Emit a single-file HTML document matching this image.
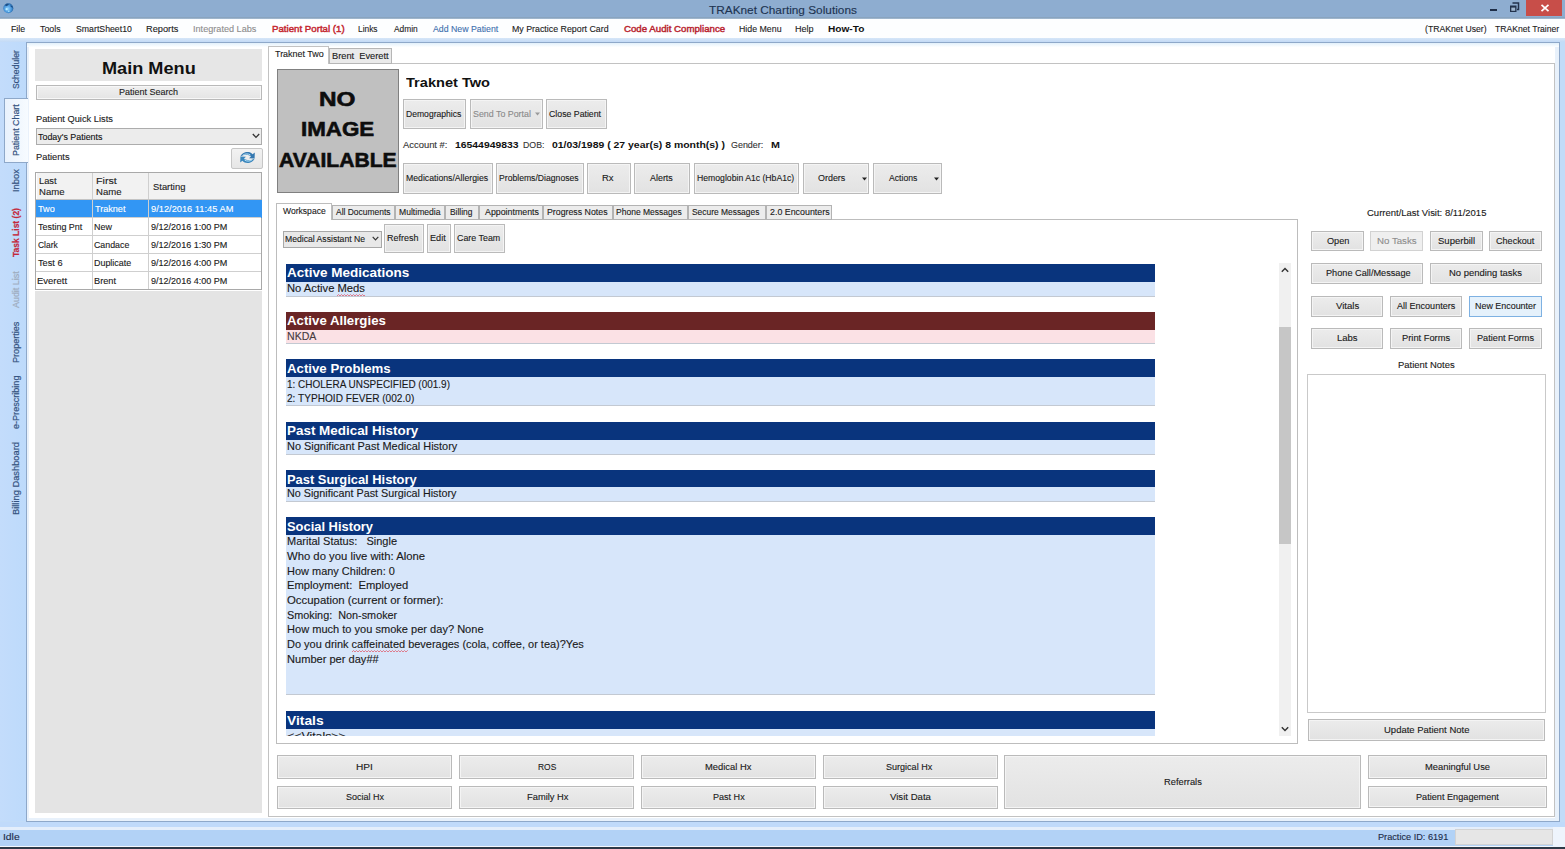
<!DOCTYPE html>
<html><head><meta charset="utf-8"><style>
html,body{margin:0;padding:0;width:1565px;height:849px;overflow:hidden;background:#c2dcf8;}
body{position:relative;font-family:"Liberation Sans",sans-serif;}
div,span,svg{position:absolute;}
.t{white-space:pre;transform-origin:0 0;}
.n{-webkit-text-stroke:0.12px currentColor;}
</style></head><body>
<div style="left:0px;top:0px;width:1565px;height:849px;background:#c2dcf8;"></div>
<div style="left:0px;top:0px;width:1565px;height:17px;background:#8eadd0;"></div>
<div style="left:0px;top:17px;width:1565px;height:2px;background:linear-gradient(#7f9bb8,#a9bed3);"></div>
<div style="left:0px;top:19px;width:1565px;height:19px;background:#fdfeff;"></div>
<div style="left:0px;top:38px;width:1565px;height:4px;background:linear-gradient(#d6e6f8,#c3daf6);"></div>
<div style="left:26px;top:42px;width:1534px;height:780px;background:#e8f1fb;border:1px solid #8ea8c9;box-sizing:border-box;"></div>
<div style="left:28px;top:44px;width:1527px;height:774px;background:#fff;"></div>
<div style="left:27px;top:43px;width:1532px;height:4px;background:linear-gradient(#e2f0fb,#fdfeff);"></div>
<div style="left:27px;top:47px;width:2px;height:771px;background:#e9f1fb;"></div>
<div style="left:0px;top:822px;width:1565px;height:5px;background:#c0dafa;"></div>
<div style="left:0px;top:827px;width:1565px;height:3px;background:#e4eefb;"></div>
<div style="left:0px;top:830px;width:1565px;height:16px;background:#b2d2f6;"></div>
<div style="left:0px;top:846px;width:1565px;height:1px;background:#f4f8fd;"></div>
<div style="left:0px;top:847px;width:1565px;height:2px;background:#2d3947;"></div>
<svg style="left:2px;top:1.5px" width="13" height="13" viewBox="0 0 13 13">
<defs><radialGradient id="gl" cx="0.45" cy="0.55" r="0.6"><stop offset="0" stop-color="#8fd0ff"/><stop offset="0.6" stop-color="#4a98dc"/><stop offset="1" stop-color="#1d5a9a"/></radialGradient></defs>
<circle cx="6.3" cy="6.2" r="5" fill="url(#gl)"/>
<path d="M3 3 Q5 1.2 7 2.2 Q6 3.6 4 4.2 Z" fill="#1b4d86"/><path d="M8.5 3.2 Q10.8 3.8 11 6 Q9.5 5.6 8.6 4.6 Z" fill="#1b4d86"/>
<circle cx="4.6" cy="7.2" r="1.1" fill="#b8ecff"/><circle cx="6.8" cy="9.2" r="0.8" fill="#a8e4ff"/></svg>
<span class="t n" style="left:708.96px;top:3.93px;font-size:11.77px;line-height:11.77px;color:#1d3350;transform:scaleX(1.0049);">TRAKnet Charting Solutions</span>
<div style="left:1490px;top:9px;width:7px;height:2px;background:#1e2e48;"></div>
<svg style="left:1509px;top:2px" width="11" height="11" viewBox="0 0 11 11"><path d="M3.5 1 H9.5 V7.5 H8" stroke="#22324c" stroke-width="1.5" fill="none"/><rect x="1" y="3.5" width="6.5" height="6.5" fill="#22324c"/><rect x="2.3" y="5.6" width="3.9" height="3.2" fill="#9fb6cf"/></svg>
<div style="left:1526px;top:0px;width:36px;height:16px;background:#c84e49;"></div>
<svg style="position:absolute;left:1540px;top:4px" width="10" height="8" viewBox="0 0 10 8"><path d="M1.5 0.8 L8.5 7.2 M8.5 0.8 L1.5 7.2" stroke="#fff" stroke-width="1.7"/></svg>
<span class="t n" style="left:10.80px;top:23.93px;font-size:9.88px;line-height:9.88px;color:#1b1b1b;transform:scaleX(0.8857);">File</span>
<span class="t n" style="left:40.12px;top:23.93px;font-size:9.88px;line-height:9.88px;color:#1b1b1b;transform:scaleX(0.8920);">Tools</span>
<span class="t n" style="left:75.71px;top:23.93px;font-size:9.88px;line-height:9.88px;color:#1b1b1b;transform:scaleX(0.8851);">SmartSheet10</span>
<span class="t n" style="left:145.86px;top:23.93px;font-size:9.88px;line-height:9.88px;color:#1b1b1b;transform:scaleX(0.9355);">Reports</span>
<span class="t n" style="left:192.78px;top:23.93px;font-size:9.88px;line-height:9.88px;color:#8d8d8d;transform:scaleX(0.9236);">Integrated Labs</span>
<span class="t n" style="left:271.73px;top:23.93px;font-size:9.88px;line-height:9.88px;color:#c4262f;transform:scaleX(0.9801);-webkit-text-stroke:0.45px #c4262f;">Patient Portal (1)</span>
<span class="t n" style="left:358.03px;top:23.93px;font-size:9.88px;line-height:9.88px;color:#1b1b1b;transform:scaleX(0.8477);">Links</span>
<span class="t n" style="left:393.60px;top:23.93px;font-size:9.88px;line-height:9.88px;color:#1b1b1b;transform:scaleX(0.8474);">Admin</span>
<span class="t n" style="left:432.50px;top:23.93px;font-size:9.88px;line-height:9.88px;color:#3d6fae;transform:scaleX(0.8867);">Add New Patient</span>
<span class="t n" style="left:511.89px;top:23.93px;font-size:9.88px;line-height:9.88px;color:#1b1b1b;transform:scaleX(0.8937);">My Practice Report Card</span>
<span class="t n" style="left:623.82px;top:23.93px;font-size:9.88px;line-height:9.88px;color:#b9242f;transform:scaleX(0.9800);-webkit-text-stroke:0.45px #b9242f;">Code Audit Compliance</span>
<span class="t n" style="left:738.50px;top:23.93px;font-size:9.88px;line-height:9.88px;color:#1b1b1b;transform:scaleX(0.8910);">Hide Menu</span>
<span class="t n" style="left:795.08px;top:23.93px;font-size:9.88px;line-height:9.88px;color:#1b1b1b;transform:scaleX(0.9150);">Help</span>
<span class="t" style="left:828.34px;top:23.93px;font-size:9.88px;line-height:9.88px;font-weight:bold;color:#111;transform:scaleX(1.0248);">How-To</span>
<span class="t n" style="left:1424.68px;top:23.93px;font-size:9.88px;line-height:9.88px;color:#1b1b1b;transform:scaleX(0.8772);">(TRAKnet User)</span>
<span class="t n" style="left:1495.33px;top:23.93px;font-size:9.88px;line-height:9.88px;color:#1b1b1b;transform:scaleX(0.8725);">TRAKnet Trainer</span>
<div style="left:0px;top:42px;width:27px;height:779px;background:linear-gradient(90deg,#c3dcfb,#bddafb);"></div>
<div style="left:26px;top:42px;width:1px;height:779px;background:#8ea8c9;"></div>
<div style="left:4px;top:98px;width:24px;height:65px;background:linear-gradient(90deg,#e9f2fd,#f7fbff);border:1px solid #8ea8c9;border-right:none;box-sizing:border-box;"></div>
<span class="t" style="left:11.27px;top:89.39px;font-size:9.60px;line-height:9.60px;color:#34527f;transform:rotate(-90deg) scaleX(0.8986);-webkit-text-stroke:0.2px #34527f;">Scheduler</span>
<span class="t" style="left:11.47px;top:155.71px;font-size:9.60px;line-height:9.60px;color:#34527f;transform:rotate(-90deg) scaleX(0.9239);-webkit-text-stroke:0.2px #34527f;">Patient Chart</span>
<span class="t" style="left:11.27px;top:192.14px;font-size:9.60px;line-height:9.60px;color:#34527f;transform:rotate(-90deg) scaleX(0.9728);-webkit-text-stroke:0.2px #34527f;">Inbox</span>
<span class="t" style="left:11.47px;top:256.99px;font-size:9.60px;line-height:9.60px;font-weight:bold;color:#c4283a;transform:rotate(-90deg) scaleX(0.8856);-webkit-text-stroke:0.2px #c4283a;">Task List (2)</span>
<span class="t" style="left:11.27px;top:307.70px;font-size:9.60px;line-height:9.60px;color:#9eabbd;transform:rotate(-90deg) scaleX(0.9287);-webkit-text-stroke:0.2px #9eabbd;">Audit List</span>
<span class="t" style="left:11.27px;top:363.13px;font-size:9.60px;line-height:9.60px;color:#34527f;transform:rotate(-90deg) scaleX(0.9468);-webkit-text-stroke:0.2px #34527f;">Properties</span>
<span class="t" style="left:11.27px;top:428.96px;font-size:9.60px;line-height:9.60px;color:#34527f;transform:rotate(-90deg) scaleX(0.9453);-webkit-text-stroke:0.2px #34527f;">e-Prescribing</span>
<span class="t" style="left:11.27px;top:515.24px;font-size:9.60px;line-height:9.60px;color:#34527f;transform:rotate(-90deg) scaleX(0.9699);-webkit-text-stroke:0.2px #34527f;">Billing Dashboard</span>
<div style="left:35px;top:49px;width:227px;height:32px;background:#e6e6e6;"></div>
<span class="t" style="left:101.62px;top:59.64px;font-size:16.13px;line-height:16.13px;font-weight:bold;color:#111;transform:scaleX(1.1264);">Main Menu</span>
<div style="left:36px;top:85px;width:226px;height:15px;background:linear-gradient(#f0f0f0,#e4e4e4);border:1px solid #b9b9b9;box-shadow:inset 0 0 0 1px #f7f7f7;box-sizing:border-box;"></div>
<span class="t n" style="left:118.98px;top:87.51px;font-size:9.20px;line-height:9.20px;color:#222;transform:scaleX(0.9794);">Patient Search</span>
<span class="t n" style="left:36.06px;top:114.71px;font-size:9.20px;line-height:9.20px;color:#222;transform:scaleX(1.0104);">Patient Quick Lists</span>
<div style="left:36px;top:128px;width:226px;height:17px;background:#ececec;border:1px solid #acacac;box-sizing:border-box;"></div>
<span class="t n" style="left:38.12px;top:131.90px;font-size:9.80px;line-height:9.80px;color:#111;transform:scaleX(0.9077);">Today's Patients</span>
<svg style="position:absolute;left:252px;top:133px" width="8" height="6" viewBox="0 0 8 6"><path d="M0.8 1 L4 4.4 L7.2 1" stroke="#333" stroke-width="1.3" fill="none"/></svg>
<span class="t n" style="left:36.05px;top:153.31px;font-size:9.20px;line-height:9.20px;color:#222;transform:scaleX(1.0124);">Patients</span>
<div style="left:231px;top:148px;width:32px;height:21px;background:linear-gradient(#f2f2f2,#e6e6e6);border:1px solid #c6c6c6;border-radius:2px;box-sizing:border-box;"></div>
<svg style="left:239px;top:150px" width="17" height="15" viewBox="0 0 17 15">
<path d="M1.5 6.5 C2.5 2.5 10 0 13.6 4.2 L15.8 2.6 L15.6 8.6 L10 8.2 L12 6.4 C9 3.8 4.5 4.4 1.5 6.5 Z" fill="#3578b0"/>
<path d="M15.5 8.5 C14.5 12.5 7 15 3.4 10.8 L1.2 12.4 L1.4 6.4 L7 6.8 L5 8.6 C8 11.2 12.5 10.6 15.5 8.5 Z" fill="#3a86bc"/>
<path d="M4 5.2 C6 3.6 9 3.4 11.4 5" stroke="#c4ecff" stroke-width="0.9" fill="none"/>
<path d="M13 9.8 C11 11.4 8 11.6 5.6 10" stroke="#c4ecff" stroke-width="0.9" fill="none"/></svg>
<div style="left:35px;top:172px;width:227px;height:118px;background:#fff;border:1px solid #a9a9a9;box-sizing:border-box;"></div>
<div style="left:37px;top:173px;width:224px;height:27px;background:#f2f2f2;"></div>
<div style="left:36px;top:200px;width:226px;height:18px;background:#3296f4;"></div>
<div style="left:36px;top:217px;width:225px;height:1px;background:#cfcfcf;"></div>
<div style="left:36px;top:235px;width:225px;height:1px;background:#cfcfcf;"></div>
<div style="left:36px;top:253px;width:225px;height:1px;background:#cfcfcf;"></div>
<div style="left:36px;top:271px;width:225px;height:1px;background:#cfcfcf;"></div>
<div style="left:92px;top:173px;width:1px;height:116px;background:#cfcfcf;"></div>
<div style="left:148px;top:173px;width:1px;height:116px;background:#cfcfcf;"></div>
<div style="left:36px;top:199px;width:225px;height:1px;background:#c4c4c4;"></div>
<span class="t n" style="left:39.45px;top:177.41px;font-size:9.20px;line-height:9.20px;color:#222;transform:scaleX(1.0145);">Last</span>
<span class="t n" style="left:39.43px;top:187.81px;font-size:9.20px;line-height:9.20px;color:#222;transform:scaleX(1.0399);">Name</span>
<span class="t n" style="left:96.35px;top:177.41px;font-size:9.20px;line-height:9.20px;color:#222;transform:scaleX(1.1602);">First</span>
<span class="t n" style="left:96.43px;top:187.81px;font-size:9.20px;line-height:9.20px;color:#222;transform:scaleX(1.0399);">Name</span>
<span class="t n" style="left:153.18px;top:182.61px;font-size:9.20px;line-height:9.20px;color:#222;transform:scaleX(1.0234);">Starting</span>
<span class="t n" style="left:37.82px;top:205.41px;font-size:9.20px;line-height:9.20px;color:#fff;transform:scaleX(0.9920);">Two</span>
<span class="t n" style="left:94.72px;top:205.41px;font-size:9.20px;line-height:9.20px;color:#fff;transform:scaleX(0.9873);">Traknet</span>
<span class="t n" style="left:150.58px;top:205.41px;font-size:9.20px;line-height:9.20px;color:#fff;transform:scaleX(1.0099);">9/12/2016 11:45 AM</span>
<span class="t n" style="left:37.82px;top:223.31px;font-size:9.20px;line-height:9.20px;color:#1a1a1a;transform:scaleX(0.9743);">Testing Pnt</span>
<span class="t n" style="left:94.19px;top:223.31px;font-size:9.20px;line-height:9.20px;color:#1a1a1a;transform:scaleX(0.9712);">New</span>
<span class="t n" style="left:150.59px;top:223.31px;font-size:9.20px;line-height:9.20px;color:#1a1a1a;transform:scaleX(0.9832);">9/12/2016 1:00 PM</span>
<span class="t n" style="left:37.58px;top:241.21px;font-size:9.20px;line-height:9.20px;color:#1a1a1a;transform:scaleX(0.9181);">Clark</span>
<span class="t n" style="left:94.46px;top:241.21px;font-size:9.20px;line-height:9.20px;color:#1a1a1a;transform:scaleX(0.9603);">Candace</span>
<span class="t n" style="left:150.59px;top:241.21px;font-size:9.20px;line-height:9.20px;color:#1a1a1a;transform:scaleX(0.9832);">9/12/2016 1:30 PM</span>
<span class="t n" style="left:37.82px;top:259.11px;font-size:9.20px;line-height:9.20px;color:#1a1a1a;transform:scaleX(1.0014);">Test 6</span>
<span class="t n" style="left:94.19px;top:259.11px;font-size:9.20px;line-height:9.20px;color:#1a1a1a;transform:scaleX(0.9701);">Duplicate</span>
<span class="t n" style="left:150.59px;top:259.11px;font-size:9.20px;line-height:9.20px;color:#1a1a1a;transform:scaleX(0.9832);">9/12/2016 4:00 PM</span>
<span class="t n" style="left:37.24px;top:277.01px;font-size:9.20px;line-height:9.20px;color:#1a1a1a;transform:scaleX(1.0340);">Everett</span>
<span class="t n" style="left:94.16px;top:277.01px;font-size:9.20px;line-height:9.20px;color:#1a1a1a;transform:scaleX(1.0019);">Brent</span>
<span class="t n" style="left:150.59px;top:277.01px;font-size:9.20px;line-height:9.20px;color:#1a1a1a;transform:scaleX(0.9832);">9/12/2016 4:00 PM</span>
<div style="left:35px;top:291px;width:227px;height:522px;background:#e4e4e4;"></div>
<div style="left:268px;top:63px;width:1287px;height:754px;background:#fff;border:1px solid #c2c2c2;box-sizing:border-box;"></div>
<div style="left:268px;top:46px;width:61px;height:18px;background:#fff;border:1px solid #c2c2c2;border-bottom:none;box-sizing:border-box;"></div>
<div style="left:329px;top:48px;width:63px;height:16px;background:#eaeaea;border:1px solid #b6b6b6;box-sizing:border-box;"></div>
<span class="t n" style="left:274.62px;top:49.91px;font-size:9.20px;line-height:9.20px;color:#1a1a1a;transform:scaleX(0.9749);">Traknet Two</span>
<span class="t n" style="left:331.76px;top:51.61px;font-size:9.20px;line-height:9.20px;color:#1a1a1a;transform:scaleX(1.0085);">Brent  Everett</span>
<div style="left:277px;top:69px;width:122px;height:124px;background:#c0c0c0;border:1.5px solid #808080;box-sizing:border-box;"></div>
<span class="t" style="left:319.22px;top:88.77px;font-size:20.35px;line-height:20.35px;font-weight:bold;color:#0d0d0d;transform:scaleX(1.1950);-webkit-text-stroke:0.6px #0d0d0d;">NO</span>
<span class="t" style="left:300.75px;top:119.13px;font-size:20.64px;line-height:20.64px;font-weight:bold;color:#0d0d0d;transform:scaleX(1.0835);-webkit-text-stroke:0.6px #0d0d0d;">IMAGE</span>
<span class="t" style="left:278.67px;top:148.96px;font-size:21.08px;line-height:21.08px;font-weight:bold;color:#0d0d0d;transform:scaleX(1.0015);-webkit-text-stroke:0.6px #0d0d0d;">AVAILABLE</span>
<span class="t" style="left:406.05px;top:76.72px;font-size:12.50px;line-height:12.50px;font-weight:bold;color:#111;transform:scaleX(1.1671);">Traknet Two</span>
<div style="left:403px;top:99px;width:63px;height:30px;background:linear-gradient(#ececec,#e2e2e2);border:1px solid #bababa;box-shadow:inset 0 0 0 1px #f4f4f4;box-sizing:border-box;"></div>
<span class="t n" style="left:405.51px;top:110.21px;font-size:9.20px;line-height:9.20px;color:#1a1a1a;transform:scaleX(0.9334);">Demographics</span>
<div style="left:470px;top:99px;width:73px;height:30px;background:linear-gradient(#ececec,#e2e2e2);border:1px solid #bababa;box-shadow:inset 0 0 0 1px #f4f4f4;box-sizing:border-box;"></div>
<span class="t n" style="left:472.60px;top:110.21px;font-size:9.20px;line-height:9.20px;color:#8a8a8a;transform:scaleX(0.9636);">Send To Portal</span>
<svg style="position:absolute;left:535px;top:112px" width="5" height="4"><path d="M0 0.5 L5 0.5 L2.5 3.5Z" fill="#9a9a9a"/></svg>
<div style="left:546px;top:99px;width:61px;height:30px;background:linear-gradient(#ececec,#e2e2e2);border:1px solid #bababa;box-shadow:inset 0 0 0 1px #f4f4f4;box-sizing:border-box;"></div>
<span class="t n" style="left:549.16px;top:110.21px;font-size:9.20px;line-height:9.20px;color:#1a1a1a;transform:scaleX(0.9522);">Close Patient</span>
<span class="t n" style="left:403.00px;top:140.81px;font-size:9.20px;line-height:9.20px;color:#333;transform:scaleX(1.0236);">Account #:</span>
<span class="t" style="left:454.88px;top:140.97px;font-size:9.01px;line-height:9.01px;font-weight:bold;color:#111;transform:scaleX(1.1539);">16544949833</span>
<span class="t n" style="left:522.60px;top:140.81px;font-size:9.20px;line-height:9.20px;color:#333;transform:scaleX(0.9529);">DOB:</span>
<span class="t" style="left:552.28px;top:140.97px;font-size:9.01px;line-height:9.01px;font-weight:bold;color:#111;transform:scaleX(1.1599);">01/03/1989 ( 27 year(s) 8 month(s) )</span>
<span class="t n" style="left:730.55px;top:140.81px;font-size:9.20px;line-height:9.20px;color:#333;transform:scaleX(0.9711);">Gender:</span>
<span class="t" style="left:770.80px;top:140.97px;font-size:9.01px;line-height:9.01px;font-weight:bold;color:#111;transform:scaleX(1.1889);">M</span>
<div style="left:403px;top:163px;width:90px;height:31px;background:linear-gradient(#ececec,#e2e2e2);border:1px solid #bababa;box-shadow:inset 0 0 0 1px #f4f4f4;box-sizing:border-box;"></div>
<span class="t n" style="left:405.50px;top:174.21px;font-size:9.20px;line-height:9.20px;color:#1a1a1a;transform:scaleX(0.9466);">Medications/Allergies</span>
<div style="left:496px;top:163px;width:88px;height:31px;background:linear-gradient(#ececec,#e2e2e2);border:1px solid #bababa;box-shadow:inset 0 0 0 1px #f4f4f4;box-sizing:border-box;"></div>
<span class="t n" style="left:498.81px;top:174.21px;font-size:9.20px;line-height:9.20px;color:#1a1a1a;transform:scaleX(0.9390);">Problems/Diagnoses</span>
<div style="left:587px;top:163px;width:44px;height:31px;background:linear-gradient(#ececec,#e2e2e2);border:1px solid #bababa;box-shadow:inset 0 0 0 1px #f4f4f4;box-sizing:border-box;"></div>
<span class="t n" style="left:601.74px;top:174.21px;font-size:9.20px;line-height:9.20px;color:#1a1a1a;transform:scaleX(1.0292);">Rx</span>
<div style="left:634px;top:163px;width:56px;height:31px;background:linear-gradient(#ececec,#e2e2e2);border:1px solid #bababa;box-shadow:inset 0 0 0 1px #f4f4f4;box-sizing:border-box;"></div>
<span class="t n" style="left:650.20px;top:174.21px;font-size:9.20px;line-height:9.20px;color:#1a1a1a;transform:scaleX(0.9705);">Alerts</span>
<div style="left:694px;top:163px;width:105px;height:31px;background:linear-gradient(#ececec,#e2e2e2);border:1px solid #bababa;box-shadow:inset 0 0 0 1px #f4f4f4;box-sizing:border-box;"></div>
<span class="t n" style="left:696.61px;top:174.21px;font-size:9.20px;line-height:9.20px;color:#1a1a1a;transform:scaleX(0.9423);">Hemoglobin A1c (HbA1c)</span>
<div style="left:803px;top:163px;width:66px;height:31px;background:linear-gradient(#ececec,#e2e2e2);border:1px solid #bababa;box-shadow:inset 0 0 0 1px #f4f4f4;box-sizing:border-box;"></div>
<span class="t n" style="left:817.50px;top:174.21px;font-size:9.20px;line-height:9.20px;color:#1a1a1a;transform:scaleX(0.9719);">Orders</span>
<div style="left:873px;top:163px;width:69px;height:31px;background:linear-gradient(#ececec,#e2e2e2);border:1px solid #bababa;box-shadow:inset 0 0 0 1px #f4f4f4;box-sizing:border-box;"></div>
<span class="t n" style="left:889.00px;top:174.21px;font-size:9.20px;line-height:9.20px;color:#1a1a1a;transform:scaleX(0.9412);">Actions</span>
<svg style="position:absolute;left:861.5px;top:176.5px" width="5" height="4"><path d="M0 0.5 L5 0.5 L2.5 3.5Z" fill="#222"/></svg>
<svg style="position:absolute;left:934px;top:176.5px" width="5" height="4"><path d="M0 0.5 L5 0.5 L2.5 3.5Z" fill="#222"/></svg>
<div style="left:276px;top:219px;width:1022px;height:525px;background:#fff;border:1px solid #bdbdbd;box-sizing:border-box;"></div>
<div style="left:332px;top:205px;width:63px;height:15px;background:#ececec;border:1px solid #b3b3b3;box-sizing:border-box;"></div>
<span class="t n" style="left:335.50px;top:207.81px;font-size:9.20px;line-height:9.20px;color:#1a1a1a;transform:scaleX(0.9208);">All Documents</span>
<div style="left:395px;top:205px;width:50px;height:15px;background:#ececec;border:1px solid #b3b3b3;box-sizing:border-box;"></div>
<span class="t n" style="left:398.61px;top:207.81px;font-size:9.20px;line-height:9.20px;color:#1a1a1a;transform:scaleX(0.9349);">Multimedia</span>
<div style="left:445px;top:205px;width:34px;height:15px;background:#ececec;border:1px solid #b3b3b3;box-sizing:border-box;"></div>
<span class="t n" style="left:449.73px;top:207.81px;font-size:9.20px;line-height:9.20px;color:#1a1a1a;transform:scaleX(0.9144);">Billing</span>
<div style="left:479px;top:205px;width:64px;height:15px;background:#ececec;border:1px solid #b3b3b3;box-sizing:border-box;"></div>
<span class="t n" style="left:484.90px;top:207.81px;font-size:9.20px;line-height:9.20px;color:#1a1a1a;transform:scaleX(0.9600);">Appointments</span>
<div style="left:543px;top:205px;width:70px;height:15px;background:#ececec;border:1px solid #b3b3b3;box-sizing:border-box;"></div>
<span class="t n" style="left:547.30px;top:207.81px;font-size:9.20px;line-height:9.20px;color:#1a1a1a;transform:scaleX(0.9562);">Progress Notes</span>
<div style="left:613px;top:205px;width:75px;height:15px;background:#ececec;border:1px solid #b3b3b3;box-sizing:border-box;"></div>
<span class="t n" style="left:616.32px;top:207.81px;font-size:9.20px;line-height:9.20px;color:#1a1a1a;transform:scaleX(0.9270);">Phone Messages</span>
<div style="left:688px;top:205px;width:78px;height:15px;background:#ececec;border:1px solid #b3b3b3;box-sizing:border-box;"></div>
<span class="t n" style="left:692.42px;top:207.81px;font-size:9.20px;line-height:9.20px;color:#1a1a1a;transform:scaleX(0.9162);">Secure Messages</span>
<div style="left:766px;top:205px;width:66px;height:15px;background:#ececec;border:1px solid #b3b3b3;box-sizing:border-box;"></div>
<span class="t n" style="left:769.86px;top:207.81px;font-size:9.20px;line-height:9.20px;color:#1a1a1a;transform:scaleX(0.9642);">2.0 Encounters</span>
<div style="left:276px;top:203px;width:56px;height:17px;background:#fff;border:1px solid #bdbdbd;border-bottom:none;box-sizing:border-box;"></div>
<span class="t n" style="left:282.76px;top:206.71px;font-size:9.20px;line-height:9.20px;color:#1a1a1a;transform:scaleX(0.9326);">Workspace</span>
<div style="left:283px;top:231px;width:99px;height:17px;background:#e8e8e8;border:1px solid #a8a8a8;box-sizing:border-box;"></div>
<span class="t n" style="left:285.31px;top:234.91px;font-size:9.20px;line-height:9.20px;color:#1a1a1a;transform:scaleX(0.9380);">Medical Assistant Ne</span>
<svg style="position:absolute;left:371.5px;top:236px" width="7" height="5" viewBox="0 0 7 5"><path d="M0.7 0.8 L3.5 3.8 L6.3 0.8" stroke="#333" stroke-width="1.2" fill="none"/></svg>
<div style="left:384px;top:224px;width:40px;height:29px;background:linear-gradient(#ececec,#e2e2e2);border:1px solid #bababa;box-shadow:inset 0 0 0 1px #f4f4f4;box-sizing:border-box;"></div>
<span class="t n" style="left:386.98px;top:234.11px;font-size:9.20px;line-height:9.20px;color:#1a1a1a;transform:scaleX(0.9752);">Refresh</span>
<div style="left:427px;top:224px;width:24px;height:29px;background:linear-gradient(#ececec,#e2e2e2);border:1px solid #bababa;box-shadow:inset 0 0 0 1px #f4f4f4;box-sizing:border-box;"></div>
<span class="t n" style="left:429.77px;top:234.11px;font-size:9.20px;line-height:9.20px;color:#1a1a1a;transform:scaleX(0.9906);">Edit</span>
<div style="left:454px;top:224px;width:51px;height:29px;background:linear-gradient(#ececec,#e2e2e2);border:1px solid #bababa;box-shadow:inset 0 0 0 1px #f4f4f4;box-sizing:border-box;"></div>
<span class="t n" style="left:457.26px;top:234.11px;font-size:9.20px;line-height:9.20px;color:#1a1a1a;transform:scaleX(0.9659);">Care Team</span>
<div style="left:277px;top:256px;width:1000px;height:479.6px;overflow:hidden;">
<div style="left:8.800000000000011px;top:7.5px;width:869.4px;height:18.0px;background:#09347d;"></div>
<div style="left:8.800000000000011px;top:25.5px;width:869.7px;height:15.3px;background:#d7e6fa;border-bottom:1px solid #c3c9d2;box-sizing:border-box;"></div>
<span class="t" style="left:10.06px;top:9.96px;font-size:13.52px;line-height:13.52px;font-weight:bold;color:#fff;transform:scaleX(0.9990);">Active Medications</span>
<span class="t n" style="left:9.50px;top:27.96px;font-size:10.32px;line-height:10.32px;color:#1a1a1a;transform:scaleX(1.0882);">No Active Meds</span>
<div style="left:8.800000000000011px;top:55.8px;width:869.4px;height:18.0px;background:#6a2525;"></div>
<div style="left:8.800000000000011px;top:73.8px;width:869.7px;height:14.6px;background:#fbe1e5;border-bottom:1px solid #c3c9d2;box-sizing:border-box;"></div>
<span class="t" style="left:10.07px;top:58.26px;font-size:13.52px;line-height:13.52px;font-weight:bold;color:#fff;transform:scaleX(0.9797);">Active Allergies</span>
<span class="t n" style="left:9.55px;top:76.26px;font-size:10.32px;line-height:10.32px;color:#463a3e;transform:scaleX(1.0247);">NKDA</span>
<div style="left:8.800000000000011px;top:103.3px;width:869.4px;height:17.9px;background:#09347d;"></div>
<div style="left:8.800000000000011px;top:121.2px;width:869.7px;height:29.2px;background:#d7e6fa;border-bottom:1px solid #c3c9d2;box-sizing:border-box;"></div>
<span class="t" style="left:10.07px;top:105.76px;font-size:13.52px;line-height:13.52px;font-weight:bold;color:#fff;transform:scaleX(0.9788);">Active Problems</span>
<span class="t n" style="left:9.65px;top:123.56px;font-size:10.32px;line-height:10.32px;color:#1a1a1a;transform:scaleX(0.9672);">1: CHOLERA UNSPECIFIED (001.9)</span>
<span class="t n" style="left:9.89px;top:138.06px;font-size:10.32px;line-height:10.32px;color:#1a1a1a;transform:scaleX(0.9795);">2: TYPHOID FEVER (002.0)</span>
<div style="left:8.800000000000011px;top:166.0px;width:869.4px;height:18.0px;background:#09347d;"></div>
<div style="left:8.800000000000011px;top:184.0px;width:869.7px;height:14.6px;background:#d7e6fa;border-bottom:1px solid #c3c9d2;box-sizing:border-box;"></div>
<span class="t" style="left:9.53px;top:168.46px;font-size:13.52px;line-height:13.52px;font-weight:bold;color:#fff;transform:scaleX(0.9935);">Past Medical History</span>
<span class="t n" style="left:9.52px;top:185.96px;font-size:10.32px;line-height:10.32px;color:#1a1a1a;transform:scaleX(1.0610);">No Significant Past Medical History</span>
<div style="left:8.800000000000011px;top:214.2px;width:869.4px;height:16.8px;background:#09347d;"></div>
<div style="left:8.800000000000011px;top:231.0px;width:869.7px;height:14.6px;background:#d7e6fa;border-bottom:1px solid #c3c9d2;box-sizing:border-box;"></div>
<span class="t" style="left:9.56px;top:216.66px;font-size:13.52px;line-height:13.52px;font-weight:bold;color:#fff;transform:scaleX(0.9538);">Past Surgical History</span>
<span class="t n" style="left:9.54px;top:233.16px;font-size:10.32px;line-height:10.32px;color:#1a1a1a;transform:scaleX(1.0446);">No Significant Past Surgical History</span>
<div style="left:8.800000000000011px;top:261.3px;width:869.4px;height:17.9px;background:#09347d;"></div>
<div style="left:8.800000000000011px;top:279.2px;width:869.7px;height:160.0px;background:#d7e6fa;border-bottom:1px solid #c3c9d2;box-sizing:border-box;"></div>
<span class="t" style="left:10.01px;top:263.76px;font-size:13.52px;line-height:13.52px;font-weight:bold;color:#fff;transform:scaleX(0.9544);">Social History</span>
<span class="t n" style="left:9.52px;top:281.46px;font-size:10.32px;line-height:10.32px;color:#1a1a1a;transform:scaleX(1.0661);">Marital Status:   Single</span>
<span class="t n" style="left:10.34px;top:296.11px;font-size:10.32px;line-height:10.32px;color:#1a1a1a;transform:scaleX(1.0947);">Who do you live with: Alone</span>
<span class="t n" style="left:9.52px;top:310.76px;font-size:10.32px;line-height:10.32px;color:#1a1a1a;transform:scaleX(1.0637);">How many Children: 0</span>
<span class="t n" style="left:9.50px;top:325.41px;font-size:10.32px;line-height:10.32px;color:#1a1a1a;transform:scaleX(1.0850);">Employment:  Employed</span>
<span class="t n" style="left:9.89px;top:340.06px;font-size:10.32px;line-height:10.32px;color:#1a1a1a;transform:scaleX(1.1045);">Occupation (current or former):</span>
<span class="t n" style="left:9.91px;top:354.71px;font-size:10.32px;line-height:10.32px;color:#1a1a1a;transform:scaleX(1.0510);">Smoking:  Non-smoker</span>
<span class="t n" style="left:9.52px;top:369.36px;font-size:10.32px;line-height:10.32px;color:#1a1a1a;transform:scaleX(1.0716);">How much to you smoke per day? None</span>
<span class="t n" style="left:9.52px;top:384.01px;font-size:10.32px;line-height:10.32px;color:#1a1a1a;transform:scaleX(1.0636);">Do you drink caffeinated beverages (cola, coffee, or tea)?Yes</span>
<span class="t n" style="left:9.51px;top:398.66px;font-size:10.32px;line-height:10.32px;color:#1a1a1a;transform:scaleX(1.0737);">Number per day##</span>
<div style="left:8.800000000000011px;top:455.2px;width:869.4px;height:17.8px;background:#09347d;"></div>
<div style="left:8.800000000000011px;top:473.0px;width:869.7px;height:31.0px;background:#d7e6fa;border-bottom:1px solid #c3c9d2;box-sizing:border-box;"></div>
<span class="t" style="left:10.33px;top:457.66px;font-size:13.52px;line-height:13.52px;font-weight:bold;color:#fff;transform:scaleX(1.0224);">Vitals</span>
<span class="t n" style="left:9.78px;top:475.76px;font-size:10.32px;line-height:10.32px;color:#1a1a1a;transform:scaleX(1.1965);">&lt;&lt;Vitals&gt;&gt;</span>
</div>
<svg style="position:absolute;left:336.5px;top:294px" width="28" height="3"><path d="M0 2 l1.5 -1.5 l1.5 1.5 l1.5 -1.5 l1.5 1.5 l1.5 -1.5 l1.5 1.5 l1.5 -1.5 l1.5 1.5 l1.5 -1.5 l1.5 1.5 l1.5 -1.5 l1.5 1.5 l1.5 -1.5 l1.5 1.5 l1.5 -1.5 l1.5 1.5 l1.5 -1.5 l1.5 1.5 l1.5 -1.5 l1.5 1.5 l1.5 -1.5 l1.5 1.5 l1.5 -1.5 l1.5 1.5" stroke="#e06070" stroke-width="0.8" fill="none"/></svg>
<svg style="position:absolute;left:352px;top:649.5px" width="56" height="3"><path d="M0 2 l1.5 -1.5 l1.5 1.5 l1.5 -1.5 l1.5 1.5 l1.5 -1.5 l1.5 1.5 l1.5 -1.5 l1.5 1.5 l1.5 -1.5 l1.5 1.5 l1.5 -1.5 l1.5 1.5 l1.5 -1.5 l1.5 1.5 l1.5 -1.5 l1.5 1.5 l1.5 -1.5 l1.5 1.5 l1.5 -1.5 l1.5 1.5 l1.5 -1.5 l1.5 1.5 l1.5 -1.5 l1.5 1.5 l1.5 -1.5 l1.5 1.5 l1.5 -1.5 l1.5 1.5 l1.5 -1.5 l1.5 1.5 l1.5 -1.5 l1.5 1.5 l1.5 -1.5 l1.5 1.5 l1.5 -1.5 l1.5 1.5 l1.5 -1.5 l1.5 1.5" stroke="#e06070" stroke-width="0.8" fill="none"/></svg>
<div style="left:1279px;top:263px;width:12px;height:473px;background:#f0f0f0;"></div>
<div style="left:1279px;top:327px;width:12px;height:217px;background:#c6c6c6;"></div>
<svg style="position:absolute;left:1280.5px;top:267px" width="8" height="6" viewBox="0 0 8 6"><path d="M0.8 4.8 L4 1.4 L7.2 4.8" stroke="#333" stroke-width="1.4" fill="none"/></svg>
<svg style="position:absolute;left:1280.5px;top:725.5px" width="8" height="6" viewBox="0 0 8 6"><path d="M0.8 1.2 L4 4.6 L7.2 1.2" stroke="#333" stroke-width="1.4" fill="none"/></svg>
<span class="t n" style="left:1366.52px;top:209.01px;font-size:9.20px;line-height:9.20px;color:#1a1a1a;transform:scaleX(1.0330);">Current/Last Visit: 8/11/2015</span>
<div style="left:1311px;top:231px;width:53px;height:20px;background:linear-gradient(#ececec,#e2e2e2);border:1px solid #bababa;box-shadow:inset 0 0 0 1px #f4f4f4;box-sizing:border-box;"></div>
<span class="t n" style="left:1326.79px;top:236.61px;font-size:9.20px;line-height:9.20px;color:#1a1a1a;transform:scaleX(0.9962);">Open</span>
<div style="left:1370px;top:231px;width:53px;height:20px;background:#efefef;border:1px solid #d2d2d2;box-sizing:border-box;"></div>
<span class="t n" style="left:1376.52px;top:236.61px;font-size:9.20px;line-height:9.20px;color:#8d8d8d;transform:scaleX(1.0542);">No Tasks</span>
<div style="left:1430px;top:231px;width:53px;height:20px;background:linear-gradient(#ececec,#e2e2e2);border:1px solid #bababa;box-shadow:inset 0 0 0 1px #f4f4f4;box-sizing:border-box;"></div>
<span class="t n" style="left:1438.47px;top:236.61px;font-size:9.20px;line-height:9.20px;color:#1a1a1a;transform:scaleX(1.0352);">Superbill</span>
<div style="left:1489px;top:231px;width:53px;height:20px;background:linear-gradient(#ececec,#e2e2e2);border:1px solid #bababa;box-shadow:inset 0 0 0 1px #f4f4f4;box-sizing:border-box;"></div>
<span class="t n" style="left:1496.35px;top:236.61px;font-size:9.20px;line-height:9.20px;color:#1a1a1a;transform:scaleX(0.9891);">Checkout</span>
<div style="left:1311px;top:263px;width:112px;height:21px;background:linear-gradient(#ececec,#e2e2e2);border:1px solid #bababa;box-shadow:inset 0 0 0 1px #f4f4f4;box-sizing:border-box;"></div>
<span class="t n" style="left:1325.57px;top:269.21px;font-size:9.20px;line-height:9.20px;color:#1a1a1a;transform:scaleX(0.9986);">Phone Call/Message</span>
<div style="left:1430px;top:263px;width:112px;height:21px;background:linear-gradient(#ececec,#e2e2e2);border:1px solid #bababa;box-shadow:inset 0 0 0 1px #f4f4f4;box-sizing:border-box;"></div>
<span class="t n" style="left:1449.34px;top:269.21px;font-size:9.20px;line-height:9.20px;color:#1a1a1a;transform:scaleX(1.0270);">No pending tasks</span>
<div style="left:1311px;top:296px;width:72px;height:21px;background:linear-gradient(#ececec,#e2e2e2);border:1px solid #bababa;box-shadow:inset 0 0 0 1px #f4f4f4;box-sizing:border-box;"></div>
<span class="t n" style="left:1335.95px;top:301.81px;font-size:9.20px;line-height:9.20px;color:#1a1a1a;transform:scaleX(1.0437);">Vitals</span>
<div style="left:1390px;top:296px;width:72px;height:21px;background:linear-gradient(#ececec,#e2e2e2);border:1px solid #bababa;box-shadow:inset 0 0 0 1px #f4f4f4;box-sizing:border-box;"></div>
<span class="t n" style="left:1397.00px;top:301.81px;font-size:9.20px;line-height:9.20px;color:#1a1a1a;transform:scaleX(0.9828);">All Encounters</span>
<div style="left:1469px;top:296px;width:73px;height:21px;background:#e5f1fb;border:1px solid #7eb1e2;box-sizing:border-box;"></div>
<span class="t n" style="left:1474.89px;top:301.81px;font-size:9.20px;line-height:9.20px;color:#1a1a1a;transform:scaleX(0.9708);">New Encounter</span>
<div style="left:1311px;top:328px;width:72px;height:21px;background:linear-gradient(#ececec,#e2e2e2);border:1px solid #bababa;box-shadow:inset 0 0 0 1px #f4f4f4;box-sizing:border-box;"></div>
<span class="t n" style="left:1336.84px;top:334.21px;font-size:9.20px;line-height:9.20px;color:#1a1a1a;transform:scaleX(1.0314);">Labs</span>
<div style="left:1390px;top:328px;width:72px;height:21px;background:linear-gradient(#ececec,#e2e2e2);border:1px solid #bababa;box-shadow:inset 0 0 0 1px #f4f4f4;box-sizing:border-box;"></div>
<span class="t n" style="left:1401.85px;top:334.21px;font-size:9.20px;line-height:9.20px;color:#1a1a1a;transform:scaleX(1.0138);">Print Forms</span>
<div style="left:1469px;top:328px;width:73px;height:21px;background:linear-gradient(#ececec,#e2e2e2);border:1px solid #bababa;box-shadow:inset 0 0 0 1px #f4f4f4;box-sizing:border-box;"></div>
<span class="t n" style="left:1477.17px;top:334.21px;font-size:9.20px;line-height:9.20px;color:#1a1a1a;transform:scaleX(0.9980);">Patient Forms</span>
<span class="t n" style="left:1397.94px;top:360.61px;font-size:9.20px;line-height:9.20px;color:#1a1a1a;transform:scaleX(1.0261);">Patient Notes</span>
<div style="left:1307px;top:374px;width:239px;height:339px;background:#fff;border:1px solid #c9c9c9;box-sizing:border-box;"></div>
<div style="left:1308px;top:719px;width:237px;height:22px;background:linear-gradient(#ececec,#e2e2e2);border:1px solid #bababa;box-shadow:inset 0 0 0 1px #f4f4f4;box-sizing:border-box;"></div>
<span class="t n" style="left:1384.39px;top:725.91px;font-size:9.20px;line-height:9.20px;color:#1a1a1a;transform:scaleX(1.0325);">Update Patient Note</span>
<div style="left:277px;top:755px;width:175px;height:24px;background:linear-gradient(#ececec,#e2e2e2);border:1px solid #bababa;box-shadow:inset 0 0 0 1px #f4f4f4;box-sizing:border-box;"></div>
<span class="t n" style="left:355.99px;top:762.81px;font-size:9.20px;line-height:9.20px;color:#1a1a1a;transform:scaleX(1.0979);">HPI</span>
<div style="left:277px;top:786px;width:175px;height:23px;background:linear-gradient(#ececec,#e2e2e2);border:1px solid #bababa;box-shadow:inset 0 0 0 1px #f4f4f4;box-sizing:border-box;"></div>
<span class="t n" style="left:346.19px;top:792.71px;font-size:9.20px;line-height:9.20px;color:#1a1a1a;transform:scaleX(0.9801);">Social Hx</span>
<div style="left:459px;top:755px;width:175px;height:24px;background:linear-gradient(#ececec,#e2e2e2);border:1px solid #bababa;box-shadow:inset 0 0 0 1px #f4f4f4;box-sizing:border-box;"></div>
<span class="t n" style="left:537.53px;top:762.81px;font-size:9.20px;line-height:9.20px;color:#1a1a1a;transform:scaleX(0.9165);">ROS</span>
<div style="left:459px;top:786px;width:175px;height:23px;background:linear-gradient(#ececec,#e2e2e2);border:1px solid #bababa;box-shadow:inset 0 0 0 1px #f4f4f4;box-sizing:border-box;"></div>
<span class="t n" style="left:526.55px;top:792.71px;font-size:9.20px;line-height:9.20px;color:#1a1a1a;transform:scaleX(1.0158);">Family Hx</span>
<div style="left:641px;top:755px;width:175px;height:24px;background:linear-gradient(#ececec,#e2e2e2);border:1px solid #bababa;box-shadow:inset 0 0 0 1px #f4f4f4;box-sizing:border-box;"></div>
<span class="t n" style="left:705.15px;top:762.81px;font-size:9.20px;line-height:9.20px;color:#1a1a1a;transform:scaleX(1.0209);">Medical Hx</span>
<div style="left:641px;top:786px;width:175px;height:23px;background:linear-gradient(#ececec,#e2e2e2);border:1px solid #bababa;box-shadow:inset 0 0 0 1px #f4f4f4;box-sizing:border-box;"></div>
<span class="t n" style="left:712.88px;top:792.71px;font-size:9.20px;line-height:9.20px;color:#1a1a1a;transform:scaleX(0.9850);">Past Hx</span>
<div style="left:823px;top:755px;width:175px;height:24px;background:linear-gradient(#ececec,#e2e2e2);border:1px solid #bababa;box-shadow:inset 0 0 0 1px #f4f4f4;box-sizing:border-box;"></div>
<span class="t n" style="left:886.49px;top:762.81px;font-size:9.20px;line-height:9.20px;color:#1a1a1a;transform:scaleX(0.9838);">Surgical Hx</span>
<div style="left:823px;top:786px;width:175px;height:23px;background:linear-gradient(#ececec,#e2e2e2);border:1px solid #bababa;box-shadow:inset 0 0 0 1px #f4f4f4;box-sizing:border-box;"></div>
<span class="t n" style="left:890.05px;top:792.71px;font-size:9.20px;line-height:9.20px;color:#1a1a1a;transform:scaleX(1.0448);">Visit Data</span>
<div style="left:1004px;top:755px;width:357px;height:54px;background:linear-gradient(#ececec,#e2e2e2);border:1px solid #bababa;box-shadow:inset 0 0 0 1px #f4f4f4;box-sizing:border-box;"></div>
<span class="t n" style="left:1164.15px;top:777.61px;font-size:9.20px;line-height:9.20px;color:#1a1a1a;transform:scaleX(1.0152);">Referrals</span>
<div style="left:1368px;top:755px;width:179px;height:24px;background:linear-gradient(#ececec,#e2e2e2);border:1px solid #bababa;box-shadow:inset 0 0 0 1px #f4f4f4;box-sizing:border-box;"></div>
<span class="t n" style="left:1424.95px;top:763.21px;font-size:9.20px;line-height:9.20px;color:#1a1a1a;transform:scaleX(1.0184);">Meaningful Use</span>
<div style="left:1368px;top:786px;width:179px;height:22px;background:linear-gradient(#ececec,#e2e2e2);border:1px solid #bababa;box-shadow:inset 0 0 0 1px #f4f4f4;box-sizing:border-box;"></div>
<span class="t n" style="left:1416.07px;top:793.01px;font-size:9.20px;line-height:9.20px;color:#1a1a1a;transform:scaleX(0.9955);">Patient Engagement</span>
<span class="t n" style="left:2.82px;top:832.91px;font-size:9.20px;line-height:9.20px;color:#1c2b48;transform:scaleX(1.1238);">Idle</span>
<span class="t n" style="left:1377.87px;top:833.01px;font-size:9.20px;line-height:9.20px;color:#1c2b48;transform:scaleX(0.9969);">Practice ID: 6191</span>
<div style="left:1553px;top:827px;width:12px;height:20px;background:#eef4fc;"></div>
<div style="left:1455px;top:829px;width:98px;height:16px;background:#e6e6e6;border:1px solid #d3d3d3;box-sizing:border-box;"></div>
</body></html>
